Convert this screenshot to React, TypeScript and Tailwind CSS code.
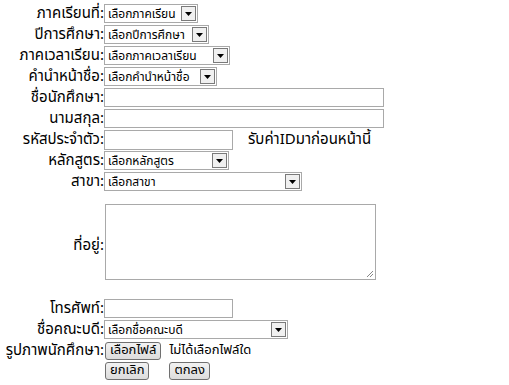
const FONT = "font-['Tahoma','Noto_Sans_Thai','Noto_Sans',sans-serif]";

function Row({ label, children, className = "h-[21px]" }: { label: string; children?: React.ReactNode; className?: string }) {
  return (
    <div className={`flex items-center ${className}`}>
      <div className="w-[104px] shrink-0 whitespace-nowrap text-right text-[15px] leading-none text-black">{label}</div>
      <div className="flex items-center">{children}</div>
    </div>
  );
}

function Select({ text, width }: { text: string; width: number }) {
  return (
    <div
      className="flex h-[19px] items-center justify-between gap-[2px] border border-[#a9a9a9] bg-white pl-[3px] pr-[1px]"
      style={{ width }}
    >
      <span className="whitespace-nowrap text-[12px] leading-none text-black">{text}</span>
      <span className="flex h-[15px] w-[15px] shrink-0 items-center justify-center border border-[#7a7a7a] bg-[#f0f0f0]">
        <svg width="7" height="4" viewBox="0 0 7 4">
          <path d="M0 0h7L3.5 4z" fill="#000" />
        </svg>
      </span>
    </div>
  );
}

function Input({ width, height = 19 }: { width: number; height?: number }) {
  return <div className="border border-[#a9a9a9] bg-white" style={{ width, height }} />;
}

function Button({ text }: { text: string }) {
  return (
    <button className="h-[18px] whitespace-nowrap rounded-[3px] border border-[#707070] bg-[linear-gradient(#f2f2f2,#dcdcdc)] px-[4px] text-[13px] leading-none text-black">
      {text}
    </button>
  );
}

export default function App() {
  return (
    <div className={`${FONT} h-[385px] w-[509px] bg-white pt-[3px]`}>
      <Row label="ภาคเรียนที่:">
        <Select text="เลือกภาคเรียน" width={94} />
      </Row>
      <Row label="ปีการศึกษา:">
        <Select text="เลือกปีการศึกษา" width={105} />
      </Row>
      <Row label="ภาคเวลาเรียน:">
        <Select text="เลือกภาคเวลาเรียน" width={126} />
      </Row>
      <Row label="คำนำหน้าชื่อ:">
        <Select text="เลือกคำนำหน้าชื่อ" width={113} />
      </Row>
      <Row label="ชื่อนักศึกษา:">
        <Input width={280} />
      </Row>
      <Row label="นามสกุล:">
        <Input width={280} />
      </Row>
      <Row label="รหัสประจำตัว:">
        <Input width={129} height={20} />
        <span className="ml-[15px] whitespace-nowrap text-[15px] leading-none text-black">รับค่าIDมาก่อนหน้านี้</span>
      </Row>
      <Row label="หลักสูตร:">
        <Select text="เลือกหลักสูตร" width={125} />
      </Row>
      <Row label="สาขา:">
        <Select text="เลือกสาขา" width={198} />
      </Row>
      <Row label="ที่อยู่:" className="h-[106px]">
        <div className="relative ml-px mt-[-6px] h-[76px] w-[271px] border border-[#a9a9a9] bg-white">
          <svg className="absolute bottom-px right-px" width="8" height="8" viewBox="0 0 8 8">
            <path d="M7 1L1 7M7 4L4 7" stroke="#888" strokeWidth="1" />
          </svg>
        </div>
      </Row>
      <Row label="โทรศัพท์:">
        <Input width={129} />
      </Row>
      <Row label="ชื่อคณะบดี:">
        <Select text="เลือกชื่อคณะบดี" width={184} />
      </Row>
      <Row label="รูปภาพนักศึกษา:">
        <div className="ml-px flex items-center">
          <Button text="เลือกไฟล์" />
          <span className="ml-[8px] whitespace-nowrap text-[13px] leading-none text-black">ไม่ได้เลือกไฟล์ใด</span>
        </div>
      </Row>
      <Row label="" className="h-[19px]">
        <div className="ml-px flex items-center gap-[20px]">
          <Button text="ยกเลิก" />
          <Button text="ตกลง" />
        </div>
      </Row>
    </div>
  );
}
